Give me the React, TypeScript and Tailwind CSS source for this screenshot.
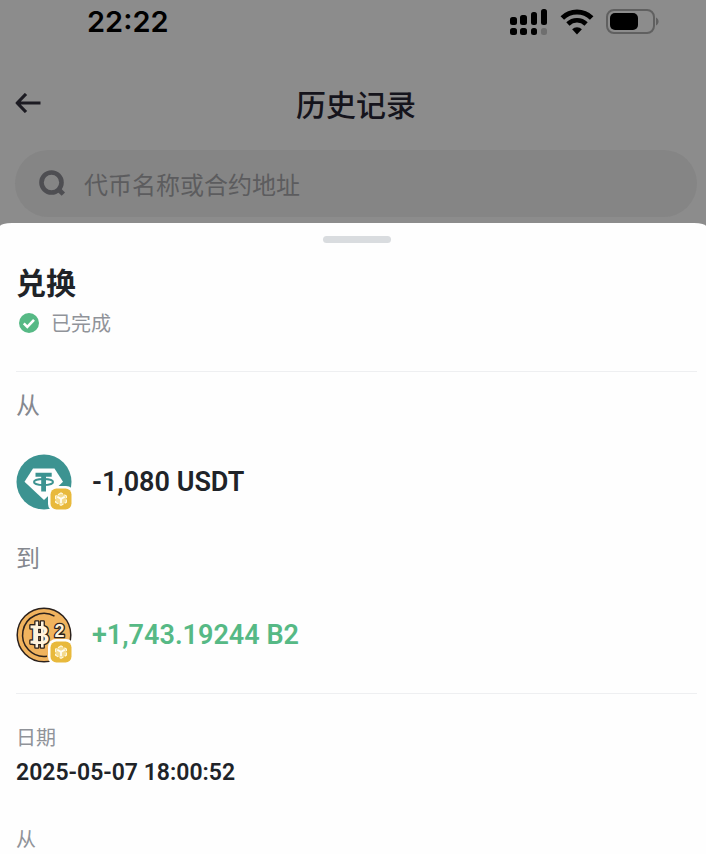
import React from "react";

interface Transfer {
    label: string;
    amount: string;
    color: string;
    icon: React.ReactNode;
}

const SignalIcon = () => (
    <svg width="38" height="28" viewBox="0 0 38 28" aria-hidden="true">
        <rect x="0" y="9" width="7" height="8" rx="2.5" />
        <rect x="10" y="7" width="7" height="10" rx="2.5" />
        <rect x="21" y="4" width="6" height="13" rx="2.5" />
        <rect x="31" y="1" width="6" height="16" rx="2.5" />
        <rect x="0" y="20" width="7" height="7" rx="2.5" />
        <rect x="10" y="20" width="7" height="7" rx="2.5" />
        <rect x="21" y="20" width="6" height="7" rx="2.5" />
        <rect x="31" y="20" width="6" height="7" rx="2.5" fill="#6f6f6f" />
    </svg>
);

const WifiIcon = () => (
    <svg width="34" height="26" viewBox="0 0 34 26" fill="none" stroke="#000" aria-hidden="true">
        <path d="M2.3 9a21 21 0 0 1 29.4 0" strokeWidth="5" />
        <path d="M7.9 15a13 13 0 0 1 18.2 0" strokeWidth="4.6" />
        <path d="M17 25.4l-4.9-5.2a7 7 0 0 1 9.8 0z" fill="#000" stroke="none" />
    </svg>
);

const BatteryIcon = () => (
    <svg width="54" height="26" viewBox="0 0 54 26" aria-hidden="true">
        <rect x="1" y="1" width="47" height="23" rx="7" fill="none" stroke="#606060" strokeWidth="2" />
        <rect x="4" y="4" width="28" height="17" rx="5" />
        <path d="M50 8.5c3.4 1.4 3.4 6.6 0 8z" fill="#606060" />
    </svg>
);

const ArrowIcon = () => (
    <svg width="26" height="20" viewBox="0 0 26 20" fill="none" stroke="#1c1b22" strokeWidth="3.2" aria-hidden="true">
        <path d="M11 1L2.2 10L11 19M2.4 10H25.5" strokeLinejoin="round" />
    </svg>
);

const SearchIcon = () => (
    <svg width="27" height="27" viewBox="0 0 27 27" fill="none" stroke="#4e4e52" aria-hidden="true">
        <circle cx="12.5" cy="12.5" r="10" strokeWidth="4.6" />
        <path d="M17 20.5l3.5-3.5 5.5 5.4-3.3 3.4z" fill="#4e4e52" stroke="none" />
    </svg>
);

const CheckIcon = () => (
    <svg width="20" height="20" viewBox="0 0 20 20" fill="none" aria-hidden="true">
        <circle cx="10" cy="10" r="10" fill="#56b985" />
        <path d="M4.8 10.3l3.5 3.5 6.7-7" stroke="#fff" strokeWidth="2.6" />
    </svg>
);

// Chain mark shown over the corner of each token
const ChainBadge = () => (
    <svg
        className="absolute -right-0.5 -bottom-0.5"
        width="26"
        height="26"
        viewBox="0 0 26 26"
        fill="none"
        aria-hidden="true"
    >
        <rect width="26" height="26" rx="8" fill="#fefefe" />
        <rect x="2.5" y="2.5" width="21" height="21" rx="6" fill="#e8b93c" />
        <path
            d="M13 7l5.4 3v6.2L13 19.3l-5.4-3.1V10z"
            fill="#f4da8c"
            stroke="#fff8dd"
            strokeWidth="1.2"
            strokeDasharray="4.4 1.6"
            strokeDashoffset="2.2"
        />
        <path d="M9.3 10.8L13 12.9l3.7-2.1M13 12.9v4.4" stroke="#fffdf2" strokeWidth="1.8" />
    </svg>
);

const TetherIcon = () => (
    <svg width="56" height="56" viewBox="0 0 56 56" fill="none" aria-hidden="true">
        <circle cx="28" cy="28" r="27.5" fill="#3c9391" />
        <path d="M17 14.5h21.5L47 27.8 28 46 8.5 27.8z" fill="#fefefe" />
        <path d="M19.5 18.8h16.2v4H30v14.8h-4.8V22.8h-5.7z" fill="#3c9391" />
        <ellipse cx="27.5" cy="28" rx="9.6" ry="3" stroke="#3c9391" strokeWidth="1.8" />
    </svg>
);

const CoinMark = () => (
    <>
        <rect x="19.5" y="14.5" width="2.6" height="26" />
        <rect x="25" y="14.5" width="2.6" height="26" />
        <rect x="14.5" y="18.4" width="6" height="3" />
        <rect x="14.5" y="33.6" width="6" height="3" />
        <text x="15.5" y="36.6" fontSize="25">B</text>
        <text x="38.5" y="29.5" fontSize="18">2</text>
    </>
);

const BitcoinTwoIcon = () => (
    <svg
        width="56"
        height="56"
        viewBox="0 0 56 56"
        fill="none"
        stroke="#2b211c"
        className="font-['Liberation_Sans',sans-serif] font-bold"
        aria-hidden="true"
    >
        <circle cx="28" cy="28" r="26.8" fill="#f0b35e" strokeWidth="1.5" />
        <path d="M38.5 9.2A21.5 21.5 0 1 0 31 49.3" strokeWidth="1.5" />
        <g strokeWidth="2.6" strokeLinejoin="round">
            <CoinMark />
        </g>
        <g fill="#fff3dc" stroke="none">
            <CoinMark />
        </g>
    </svg>
);

const transfers: Transfer[] = [
    { label: "从", amount: "-1,080 USDT", color: "text-[#202328]", icon: <TetherIcon /> },
    { label: "到", amount: "+1,743.19244 B2", color: "text-[#56b985]", icon: <BitcoinTwoIcon /> },
];

const TransferRow: React.FC<Transfer> = ({ label, amount, color, icon }) => (
    <div>
        <h3 className="text-2xl leading-8 text-[#85888f]">{label}</h3>
        <div className="mt-[34px] flex items-center gap-5">
            <span className="relative shrink-0">
                {icon}
                <ChainBadge />
            </span>
            <p className={`font-['Roboto',sans-serif] text-[27px] leading-8 font-semibold ${color}`}>{amount}</p>
        </div>
    </div>
);

const App: React.FC = () => {
    return (
        <div className="flex min-h-screen flex-col bg-[#8c8c8c] font-['Noto_Sans_CJK_SC',sans-serif]">
            {/* Status bar */}
            <div className="flex h-11 items-center justify-between pr-[46px] pl-[87px]">
                <time className="font-['Inter',sans-serif] text-[29px] leading-9 font-semibold text-black">22:22</time>
                <div className="flex items-center gap-3">
                    <SignalIcon />
                    <WifiIcon />
                    <BatteryIcon />
                </div>
            </div>

            {/* Page behind the sheet */}
            <header className="mt-[27px] grid h-16 grid-cols-[1fr_auto_1fr] items-center pr-[9px] pl-[15px]">
                <button type="button" aria-label="返回" className="justify-self-start">
                    <ArrowIcon />
                </button>
                <h1 className="text-[30px] leading-10 font-medium text-[#15141c]">历史记录</h1>
            </header>
            <label className="mt-[15px] mr-[9px] mb-1.5 ml-[15px] flex h-[67px] items-center gap-[18px] rounded-full bg-[#858585] px-6">
                <SearchIcon />
                <input
                    type="text"
                    aria-label="代币名称或合约地址"
                    placeholder="代币名称或合约地址"
                    className="h-10 min-w-0 flex-1 bg-transparent text-2xl text-[#3c3c3c] outline-none placeholder:text-[#5c5c5e]"
                />
            </label>

            {/* Transaction sheet */}
            <main className="flex-1 rounded-[12px_12px_0_0/3px_3px_0_0] bg-[#fefefe] pt-[13px] pr-[9px] pl-4">
                <div className="mx-auto h-[7px] w-17 rounded-full bg-[#d9dcdf]" />
                <h2 className="mt-[18px] text-[30px] leading-10 font-bold text-[#202328]">兑换</h2>
                <p className="mt-2 flex items-center gap-3 pl-[3px] text-xl leading-7 text-[#909399]">
                    <CheckIcon />
                    已完成
                </p>

                <section className="mt-[34px] flex flex-col gap-[31px] border-y border-[#eeeff1] pt-4 pb-[30px]">
                    {transfers.map((transfer) => (
                        <TransferRow key={transfer.label} {...transfer} />
                    ))}
                </section>

                <dl className="pt-[29px]">
                    <dt className="text-xl leading-7 text-[#909399]">日期</dt>
                    <dd className="mt-1.5 font-['Roboto',sans-serif] text-[23px] leading-8 font-semibold text-[#202328]">
                        2025-05-07 18:00:52
                    </dd>
                    <dt className="mt-9 text-xl leading-7 text-[#909399]">从</dt>
                </dl>
            </main>
        </div>
    );
};

export default App;
